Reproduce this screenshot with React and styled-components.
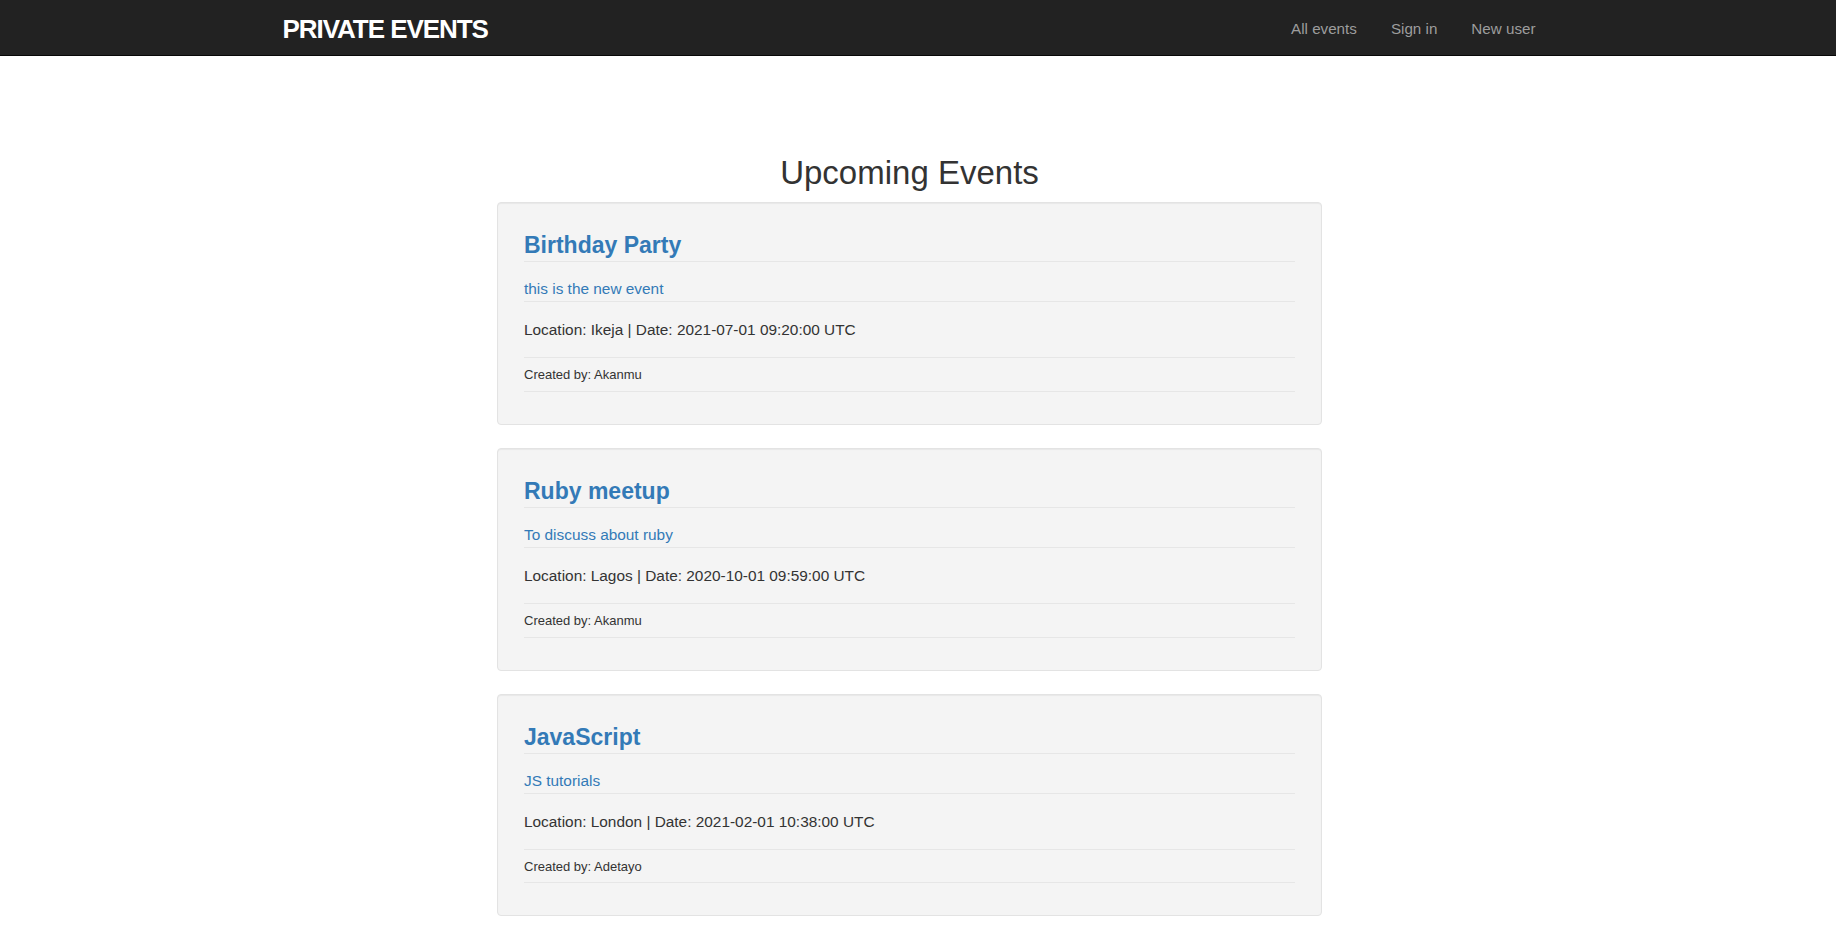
import React from "react";
import styled, { createGlobalStyle } from "styled-components";

const events = [
  {
    id: 1,
    name: "Birthday Party",
    description: "this is the new event",
    location: "Ikeja",
    date: "2021-07-01 09:20:00 UTC",
    creator: "Akanmu",
  },
  {
    id: 2,
    name: "Ruby meetup",
    description: "To discuss about ruby",
    location: "Lagos",
    date: "2020-10-01 09:59:00 UTC",
    creator: "Akanmu",
  },
  {
    id: 3,
    name: "JavaScript",
    description: "JS tutorials",
    location: "London",
    date: "2021-02-01 10:38:00 UTC",
    creator: "Adetayo",
  },
];

export default function App() {
  return (
    <>
      <GlobalStyle />
      <Navbar>
        <NavInner>
          <Brand href="#">PRIVATE EVENTS</Brand>
          <NavLinks>
            <NavLink href="#">All events</NavLink>
            <NavLink href="#">Sign in</NavLink>
            <NavLink href="#">New user</NavLink>
          </NavLinks>
        </NavInner>
      </Navbar>
      <Main>
        <PageTitle>Upcoming Events</PageTitle>
        {events.map((event) => (
          <EventCard key={event.id}>
            <EventName href="#">{event.name}</EventName>
            <Description>{event.description}</Description>
            <Details>
              Location: {event.location} | Date: {event.date}
            </Details>
            <Creator>Created by: {event.creator}</Creator>
          </EventCard>
        ))}
      </Main>
    </>
  );
}

// the original page is laid out beside a 17px scrollbar gutter
const GUTTER = 17;

const GlobalStyle = createGlobalStyle`
  html, body {
    margin: 0;
    padding: 0;
    background: #fff;
  }
  body {
    font-family: "Liberation Sans", Arial, Helvetica, sans-serif;
    font-size: 15.4px;
    line-height: 1.42857;
    color: #333;
  }
  * {
    box-sizing: border-box;
  }
`;

const Navbar = styled.nav`
  height: 56px;
  padding-right: ${GUTTER}px;
  background-color: #222;
  border-bottom: 1px solid #080808;
`;

const NavInner = styled.div`
  width: 1290px;
  height: 100%;
  margin: 0 auto;
  padding: 0 2px 0 18px;
  display: flex;
  align-items: center;
  justify-content: space-between;
`;

const Brand = styled.a`
  font-size: 26px;
  font-weight: 700;
  letter-spacing: -1.05px;
  color: #fff;
  text-decoration: none;
  line-height: 1;
  margin-top: 3px;
`;

const NavLinks = styled.div`
  display: flex;
  align-items: center;
  margin-top: 2px;
`;

const NavLink = styled.a`
  font-size: 15.2px;
  color: #9d9d9d;
  text-decoration: none;
  padding: 0 17px;
  line-height: 20px;
`;

const Main = styled.main`
  display: flex;
  flex-direction: column;
  align-items: center;
  padding: 99px ${GUTTER}px 30px 0;
`;

const PageTitle = styled.h1`
  margin: 0 0 11px;
  font-size: 33px;
  font-weight: 500;
  line-height: 36px;
  color: #333;
`;

const EventCard = styled.section`
  width: 825px;
  padding: 30px 26px 32px;
  margin-bottom: 23px;
  background-color: #f4f4f4;
  border: 1px solid #e3e3e3;
  border-radius: 4px;
  box-shadow: inset 0 1px 1px rgba(0, 0, 0, 0.05);
`;

const EventName = styled.a`
  display: block;
  font-size: 23px;
  font-weight: 700;
  line-height: 25.3px;
  color: #337ab7;
  text-decoration: none;
  padding-bottom: 3px;
  border-bottom: 1px solid #e6e6e6;
`;

const Description = styled.div`
  margin-top: 16px;
  padding-bottom: 1px;
  color: #337ab7;
  line-height: 22px;
  border-bottom: 1px solid #e6e6e6;
`;

const Details = styled.p`
  margin: 17px 0 0;
  padding-bottom: 16px;
  line-height: 22px;
  border-bottom: 1px solid #e6e6e6;
`;

const Creator = styled.p`
  margin: 8px 0 0;
  padding-bottom: 6px;
  font-size: 13px;
  line-height: 18.5px;
  border-bottom: 1px solid #e6e6e6;
`;
